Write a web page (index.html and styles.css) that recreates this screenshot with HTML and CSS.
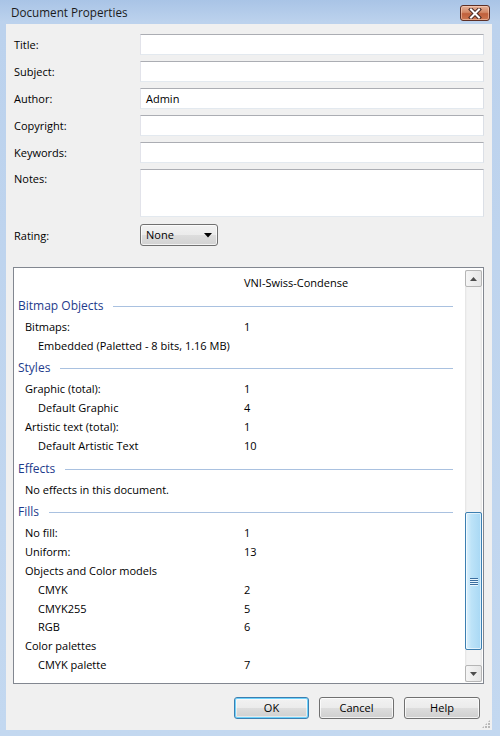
FILE: index.html
```html
<!DOCTYPE html>
<html>
<head>
<meta charset="utf-8">
<link rel="stylesheet" href="styles.css">
</head>
<body>
<div class="window">
  <div class="titlebar">
    <span class="title">Document Properties</span>
    <div class="close">
      <svg width="14" height="11" viewBox="0 0 14 11">
        <path d="M3 1.5 L11 9.5 M11 1.5 L3 9.5" stroke="#4a2a24" stroke-width="4" stroke-linecap="square" fill="none"/>
        <path d="M3 1.5 L11 9.5 M11 1.5 L3 9.5" stroke="#ffffff" stroke-width="2" stroke-linecap="square" fill="none"/>
      </svg>
    </div>
  </div>
  <div class="client">
    <div class="form">
      <span class="lbl">Title:</span><div class="field"></div>
      <span class="lbl">Subject:</span><div class="field"></div>
      <span class="lbl">Author:</span><div class="field">Admin</div>
      <span class="lbl">Copyright:</span><div class="field"></div>
      <span class="lbl">Keywords:</span><div class="field"></div>
      <span class="lbl lbl-top">Notes:</span><div class="field notes"></div>
      <span class="lbl lbl-rating">Rating:</span>
      <div class="combo"><span>None</span>
        <svg width="8" height="5" viewBox="0 0 8 5"><path d="M0 0 H8 L4 4.5 Z" fill="#000"/></svg>
      </div>
    </div>

    <div class="listbox">
      <div class="list-content">
        <div class="row lvl1"><span class="name"></span><span class="val">VNI-Swiss-Condense</span></div>
        <div class="hdr"><span>Bitmap Objects</span><i class="rule"></i></div>
        <div class="row lvl1"><span class="name">Bitmaps:</span><span class="val">1</span></div>
        <div class="row lvl2"><span class="name wide">Embedded (Paletted - 8 bits, 1.16 MB)</span></div>
        <div class="hdr"><span>Styles</span><i class="rule"></i></div>
        <div class="row lvl1"><span class="name">Graphic (total):</span><span class="val">1</span></div>
        <div class="row lvl2"><span class="name">Default Graphic</span><span class="val">4</span></div>
        <div class="row lvl1"><span class="name">Artistic text (total):</span><span class="val">1</span></div>
        <div class="row lvl2"><span class="name">Default Artistic Text</span><span class="val">10</span></div>
        <div class="hdr"><span>Effects</span><i class="rule"></i></div>
        <div class="row lvl1"><span class="name wide">No effects in this document.</span></div>
        <div class="hdr"><span>Fills</span><i class="rule"></i></div>
        <div class="row lvl1"><span class="name">No fill:</span><span class="val">1</span></div>
        <div class="row lvl1"><span class="name">Uniform:</span><span class="val">13</span></div>
        <div class="row lvl1"><span class="name wide">Objects and Color models</span></div>
        <div class="row lvl2"><span class="name">CMYK</span><span class="val">2</span></div>
        <div class="row lvl2"><span class="name">CMYK255</span><span class="val">5</span></div>
        <div class="row lvl2"><span class="name">RGB</span><span class="val">6</span></div>
        <div class="row lvl1"><span class="name wide">Color palettes</span></div>
        <div class="row lvl2"><span class="name">CMYK palette</span><span class="val">7</span></div>
      </div>
      <div class="scrollbar">
        <div class="sbtn">
          <svg width="7" height="4" viewBox="0 0 7 4"><path d="M0 4 L3.5 0 L7 4 Z" fill="#4d4d4d"/></svg>
        </div>
        <div class="track">
          <div class="thumb">
            <div class="grip"><i></i><i></i><i></i><i></i></div>
          </div>
        </div>
        <div class="sbtn">
          <svg width="7" height="4" viewBox="0 0 7 4"><path d="M0 0 L7 0 L3.5 4 Z" fill="#4d4d4d"/></svg>
        </div>
      </div>
    </div>

    <div class="buttons">
      <div class="btn default">OK</div>
      <div class="btn">Cancel</div>
      <div class="btn">Help</div>
    </div>
    <div class="grip-corner"></div>
  </div>
</div>
</body>
</html>
```
FILE: styles.css
```css
* { box-sizing: border-box; }
body {
  margin: 0;
  background: #c2d6ee;
  font-family: "Open Sans", "Noto Sans", sans-serif;
  font-size: 11px;
  color: #000;
}
.window {
  width: 500px;
  height: 736px;
  display: flex;
  flex-direction: column;
  background: linear-gradient(#a9c4e6 0px, #bcd2ed 22px, #c3d8f0 100%);
}
.titlebar {
  height: 24px;
  flex: none;
  display: flex;
  justify-content: space-between;
  align-items: flex-start;
  padding: 0 10px 0 11px;
}
.title {
  font-size: 11.7px;
  line-height: 24px;
  color: #1b1b1b;
}
.close {
  margin-top: 5px;
  width: 30px;
  height: 16px;
  border: 1px solid #5e3026;
  border-radius: 3px;
  background: linear-gradient(#e6b29a 0%, #d38866 45%, #c0603c 55%, #cc7650 100%);
  box-shadow: inset 0 0 0 1px rgba(255, 220, 200, 0.5);
  display: flex;
  align-items: center;
  justify-content: center;
}
.client {
  position: relative;
  flex: 1;
  margin: 0 8px 6px 6px;
  background: #f0f0f0;
  display: flex;
  flex-direction: column;
  padding: 10px 8px 0 7px;
}
.form {
  display: grid;
  grid-template-columns: 127px 1fr;
  grid-template-rows: repeat(5, 21px) 48px 22px;
  row-gap: 6px;
}
.lbl {
  padding-left: 1px;
  align-self: center;
}
.lbl-top {
  align-self: start;
  padding-top: 2px;
}
.lbl-rating { margin-top: 2px; }
.field {
  background: #fff;
  border-top: 1px solid #abadb3;
  border-left: 1px solid #e2e3ea;
  border-right: 1px solid #dbdfe6;
  border-bottom: 1px solid #e3e9ef;
  padding-left: 5px;
  line-height: 19px;
}
.combo {
  margin-top: 1px;
  width: 78px;
  height: 22px;
  border: 1px solid #707070;
  border-radius: 3px;
  background: linear-gradient(#f2f2f2 0%, #ebebeb 50%, #dddddd 50%, #d2d2d2 100%);
  box-shadow: inset 0 0 0 1px rgba(255, 255, 255, 0.7);
  display: flex;
  align-items: center;
  justify-content: space-between;
  padding: 0 5px 0 5px;
  line-height: 20px;
}
.listbox {
  margin-top: 22px;
  height: 417px;
  border: 1px solid #828790;
  background: #fff;
  display: flex;
  flex: none;
}
.list-content {
  flex: 1;
  overflow: hidden;
  padding-top: 6px;
}
.row {
  display: grid;
  grid-template-columns: 230px 1fr;
  height: 18.8px;
  line-height: 18.8px;
  white-space: nowrap;
}
.row .wide { grid-column: 1 / 3; }
.lvl1 .name { padding-left: 11px; }
.lvl2 .name { padding-left: 24px; }
.hdr {
  display: flex;
  align-items: center;
  height: 25px;
  padding-left: 4px;
  color: #1e3b8c;
  font-size: 12px;
}
.rule {
  flex: 1;
  height: 1px;
  margin: 2px 12px 0 10px;
  background: #a9c1e0;
}
.scrollbar {
  width: 17px;
  margin: 2px 1px 1px 0;
  display: flex;
  flex-direction: column;
  background: linear-gradient(to right, #e3e3e3 0, #f3f3f3 2px, #f3f3f3 15px, #e3e3e3 17px);
}
.sbtn {
  height: 17px;
  flex: none;
  border: 1px solid #b5b5b5;
  border-radius: 2px;
  background: linear-gradient(to right, #f5f5f5, #e6e6e6);
  display: flex;
  align-items: center;
  justify-content: center;
}
.track {
  flex: 1;
  display: flex;
  flex-direction: column;
  justify-content: flex-end;
  padding-bottom: 15px;
}
.thumb {
  height: 138px;
  border: 1px solid #3c7fb1;
  border-radius: 2px;
  background: linear-gradient(to right, #dff2fd 0, #bde3f8 35%, #a8d8f4 100%);
  box-shadow: inset 0 0 0 1px rgba(255, 255, 255, 0.6);
  display: flex;
  align-items: center;
  justify-content: center;
}
.grip {
  display: flex;
  flex-direction: column;
  gap: 1px;
}
.grip i {
  display: block;
  width: 8px;
  height: 1px;
  background: #3a6ea0;
  box-shadow: 0 1px 0 #e8f6fe;
}
.buttons {
  margin-top: 13px;
  display: flex;
  justify-content: flex-end;
  gap: 10px;
  padding-right: 4px;
}
.btn {
  width: 75px;
  height: 22px;
  border: 1px solid #707070;
  border-radius: 3px;
  background: linear-gradient(#f2f2f2 0%, #ebebeb 50%, #dddddd 50%, #cfcfcf 100%);
  box-shadow: inset 0 0 0 1px rgba(255, 255, 255, 0.75);
  text-align: center;
  line-height: 20px;
}
.btn:last-child { width: 76px; }
.btn.default {
  border-color: #3c7fb1;
  box-shadow: inset 0 0 0 1px #6fd2fb, inset 0 0 0 2px rgba(255,255,255,0.5);
}
.grip-corner {
  position: absolute;
  right: 2px;
  bottom: 2px;
  width: 8px;
  height: 8px;
  background:
    radial-gradient(circle at 1px 1px, #b8b8b8 1px, transparent 1.2px) 0 0 / 3px 3px;
  clip-path: polygon(100% 0, 100% 100%, 0 100%);
}
```
